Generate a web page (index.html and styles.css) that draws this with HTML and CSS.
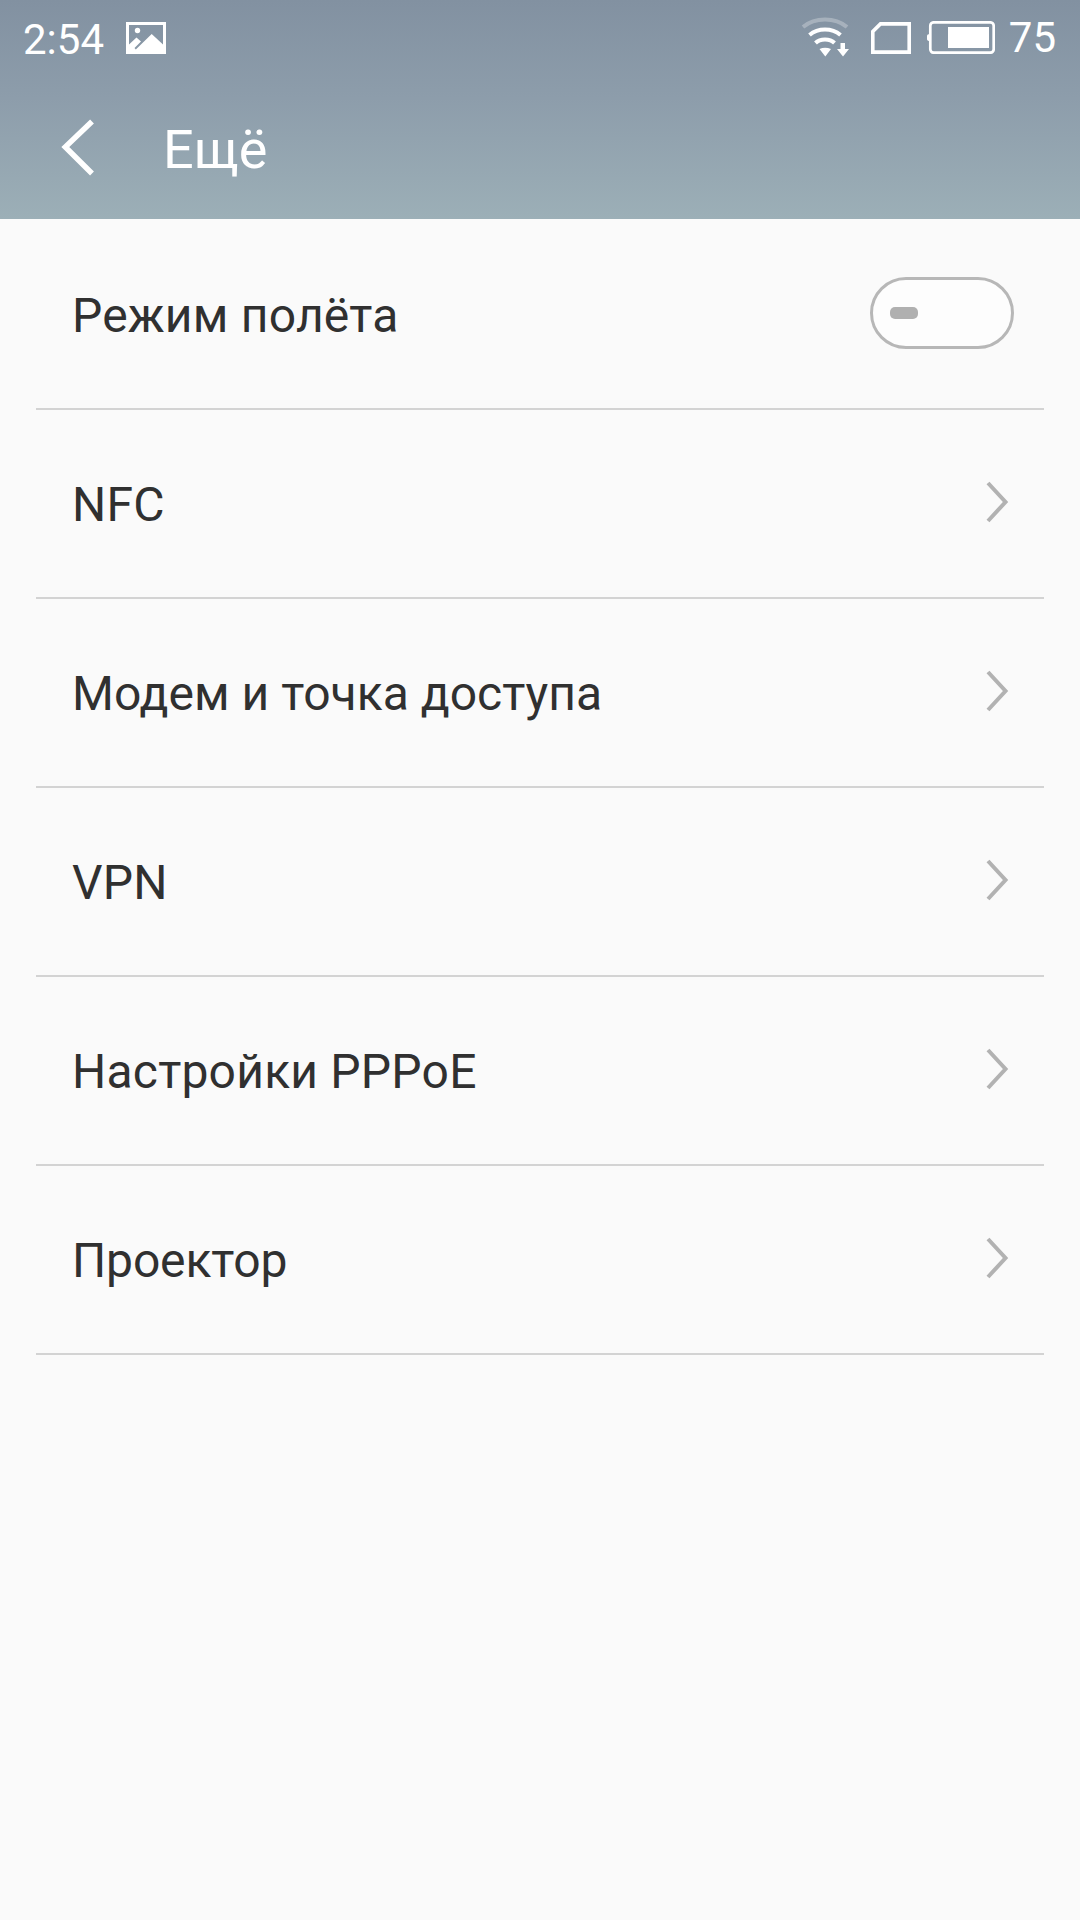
FILE: index.html
```html
<!DOCTYPE html>
<html lang="ru">
<head>
<meta charset="utf-8">
<title>Ещё</title>
<link rel="stylesheet" href="styles.css">
</head>
<body>
<header class="header">
  <div class="status">
    <span class="time">2:54</span>
    <svg class="picture" width="40" height="32" viewBox="0 0 40 32">
      <path fill="#fff" fill-rule="evenodd" d="M0 0H40V32H0ZM3 3V22.500L10.500 15.500L15 19.500L8.500 26L9.800 27.500L25.700 12L37 22.500V3Z"/>
      <circle cx="11.500" cy="8.500" r="2.700" fill="#fff"/>
    </svg>
    <div class="indicators">
      <svg class="wifi" width="50" height="42" viewBox="0 0 50 42" fill="none" stroke="#fff">
        <path stroke="#fff" stroke-opacity=".28" stroke-width="4" d="M3 11Q12 3.500 25 3.500T47 11"/>
        <path stroke-width="4" d="M9.500 19Q16 13.500 25 13.500T40.500 19"/>
        <path stroke-width="4" d="M15.500 27Q19 23.500 25 23.500T34.500 27"/>
        <path fill="#fff" stroke="none" d="M19.500 33Q25 30.500 31 33L25.300 40.500ZM40.500 27H45V33H49L43 40.500L37 33H40.500Z"/>
      </svg>
      <svg class="sim" width="40" height="32" viewBox="0 0 40 32" fill="none">
        <path stroke="#fff" stroke-width="3.600" d="M9.500 1.900H38.200V30.100H1.800V9.600Z"/>
      </svg>
      <svg class="battery" width="68" height="33" viewBox="0 0 68 33">
        <path fill="#fff" d="M3 13V20Q0 20 0 18V15Q0 13 3 13Z"/>
        <rect x="3.300" y="1.300" width="63.400" height="30.400" rx="3.500" fill="none" stroke="#fff" stroke-width="2.700"/>
        <rect x="21" y="6" width="41" height="21" fill="#fff"/>
      </svg>
      <span class="percent">75</span>
    </div>
  </div>
  <div class="bar">
    <svg class="back" width="34" height="58" viewBox="0 0 34 58" fill="none">
      <path stroke="#fff" stroke-width="5.500" stroke-linejoin="miter" d="M31 2.500L4.300 28L31 54.500"/>
    </svg>
    <h1 class="title">Ещё</h1>
  </div>
</header>
<main class="list">
  <div class="row"><span class="label loose">Режим полёта</span><span class="toggle"><span class="knob"></span></span></div>
  <div class="row"><span class="label loose">NFC</span><svg class="chevron" width="23" height="42" viewBox="0 0 23 42"><path d="M2 2L19.500 21L2 40"/></svg></div>
  <div class="row"><span class="label">Модем и точка доступа</span><svg class="chevron" width="23" height="42" viewBox="0 0 23 42"><path d="M2 2L19.500 21L2 40"/></svg></div>
  <div class="row"><span class="label loose">VPN</span><svg class="chevron" width="23" height="42" viewBox="0 0 23 42"><path d="M2 2L19.500 21L2 40"/></svg></div>
  <div class="row"><span class="label loose">Настройки PPPoE</span><svg class="chevron" width="23" height="42" viewBox="0 0 23 42"><path d="M2 2L19.500 21L2 40"/></svg></div>
  <div class="row"><span class="label tight">Проектор</span><svg class="chevron" width="23" height="42" viewBox="0 0 23 42"><path d="M2 2L19.500 21L2 40"/></svg></div>
</main>
</body>
</html>
```
FILE: styles.css
```css
* { box-sizing: border-box; }
body {
  margin: 0;
  min-height: 1920px;
  background: #fafafa;
  color: #303030;
  font-family: Roboto, "Liberation Sans", sans-serif;
}
.header {
  height: 219px;
  background: linear-gradient(#8291a1, #8d9dab 45%, #9cafb7);
  color: #fff;
}
.status {
  display: flex;
  align-items: flex-start;
  height: 78px;
  padding: 0 24px 0 23px;
}
.time, .percent {
  font-size: 42px;
  line-height: 50px;
}
.time { margin-top: 15px; }
.percent { margin: 13px 0 0 14px; }
.picture { margin: 22px 0 0 22px; }
.indicators {
  display: flex;
  align-items: flex-start;
  margin-left: auto;
}
.wifi { margin-top: 16px; }
.sim { margin: 22px 0 0 21px; }
.battery { margin: 21px 0 0 16px; }
.bar {
  display: flex;
  align-items: flex-start;
  padding: 41px 0 0 61px;
}
.title {
  margin: -1px 0 0 68px;
  font-size: 54px;
  font-weight: 400;
  line-height: 64px;
}
.list { padding: 2px 36px 0; }
.row {
  display: flex;
  align-items: center;
  justify-content: space-between;
  height: 189px;
  padding: 0 30px 3px 36px;
  border-bottom: 2px solid #d3d3d3;
}
.label {
  padding-top: 6px;
  font-size: 48px;
  line-height: 58px;
  white-space: nowrap;
}
.loose { letter-spacing: 0.22px; }
.tight { letter-spacing: -0.15px; }
.chevron {
  margin-right: 5px;
  fill: none;
  stroke: #b2b2b2;
  stroke-width: 4;
}
.toggle {
  display: flex;
  align-items: center;
  width: 144px;
  height: 72px;
  padding-left: 17px;
  border: 3px solid #b7b7b7;
  border-radius: 36px;
  background: #fdfdfd;
}
.knob {
  width: 28px;
  height: 12px;
  border-radius: 5px;
  background: #b0b0b0;
}
```
